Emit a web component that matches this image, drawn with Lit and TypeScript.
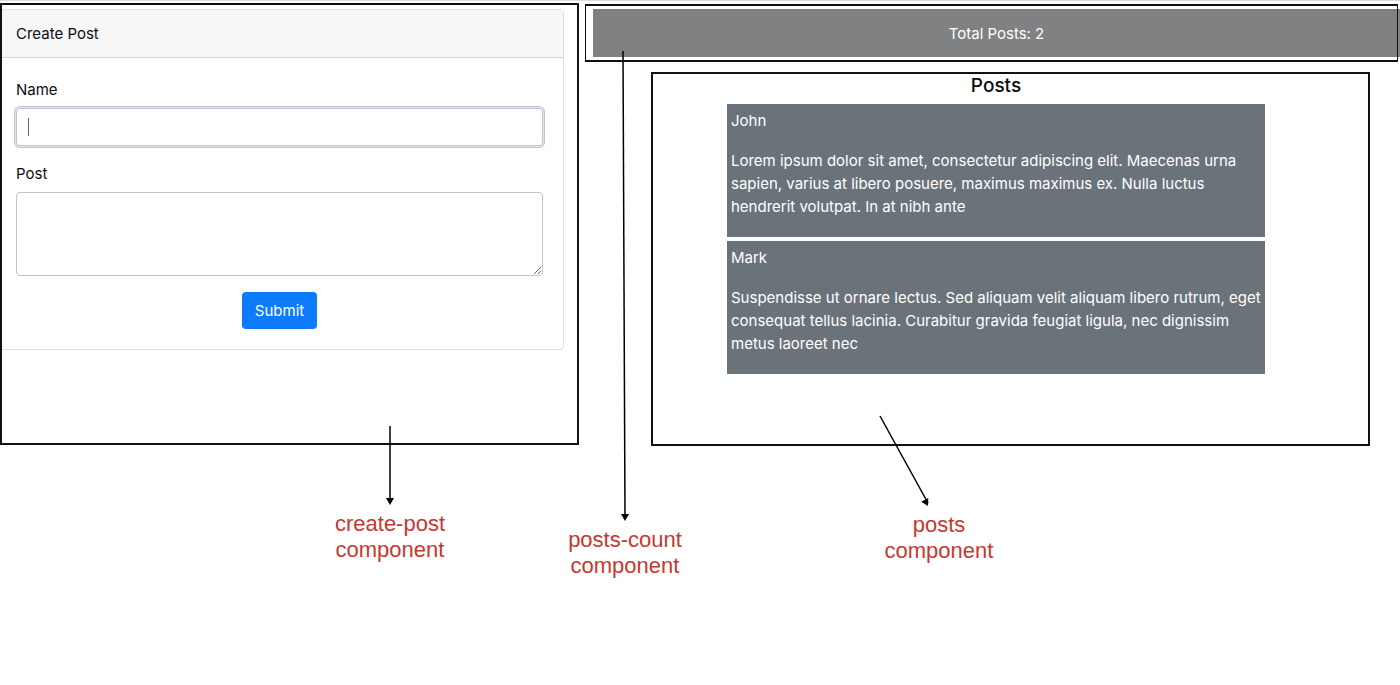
import { LitElement, html, css } from "lit";
import { customElement, property } from "lit/decorators.js";

interface Post {
  name: string;
  text: string;
}

const POSTS: Post[] = [
  {
    name: "John",
    text: "Lorem ipsum dolor sit amet, consectetur adipiscing elit. Maecenas urna sapien, varius at libero posuere, maximus maximus ex. Nulla luctus hendrerit volutpat. In at nibh ante",
  },
  {
    name: "Mark",
    text: "Suspendisse ut ornare lectus. Sed aliquam velit aliquam libero rutrum, eget consequat tellus lacinia. Curabitur gravida feugiat ligula, nec dignissim metus laoreet nec",
  },
];

// An arrow with a two-line red caption below its tip.
@customElement("component-note")
class ComponentNote extends LitElement {
  @property() name = "";
  @property({ type: Number }) length = 80;
  @property({ type: Number }) from = 60;
  @property({ type: Number }) to = 60;

  static styles = css`
    :host {
      display: flex;
      flex-direction: column;
      align-items: center;
      gap: 6px;
      width: 120px;
      pointer-events: none;
    }
    .caption {
      color: #c9372f;
      font: 22px/26px "Liberation Sans", Helvetica, sans-serif;
      text-align: center;
    }
    .arrow {
      display: block;
      overflow: visible;
    }
  `;

  render() {
    const angle = (Math.atan2(this.length, this.to - this.from) * 180) / Math.PI;
    return html`
      <svg class="arrow" width="120" height=${this.length} aria-hidden="true">
        <line x1=${this.from} y1="0" x2=${this.to} y2=${this.length - 3} stroke="#000" stroke-width="1.5" />
        <path d="M0 0L-7 -4V4Z" transform="translate(${this.to} ${this.length}) rotate(${angle})" />
      </svg>
      <div class="caption">${this.name}<br />component</div>
    `;
  }
}

@customElement("create-post")
class CreatePost extends LitElement {
  static styles = css`
    :host {
      display: block;
    }
    .card {
      border: 1px solid #dfdfe5;
      border-left: 0;
      border-radius: 0 4px 4px 0;
    }
    .header {
      padding: 12px 14px 11px;
      border-bottom: 1px solid #d4d4dc;
      background: #f7f7f8;
    }
    .body {
      display: flex;
      flex-direction: column;
      padding: 20px 20px 20px 14px;
    }
    .label {
      margin-bottom: 6px;
    }
    .field {
      position: relative;
      display: flex;
      margin-bottom: 16px;
    }
    .input,
    .area {
      box-sizing: border-box;
      width: 100%;
      margin: 0;
      padding: 6px 12px;
      border: 1px solid #c4c4d0;
      border-radius: 4px;
      outline: 0;
      background: #fff;
      color: #0b0d10;
      font: inherit;
    }
    .input {
      height: 38px;
      box-shadow: 0 0 0 1px #e4e4ea, 0 0 0 2px #c4c4d0;
      caret-color: transparent;
    }
    .caret {
      position: absolute;
      top: 10px;
      left: 12px;
      width: 1px;
      height: 18px;
      background: #5f666d;
    }
    .area {
      display: block;
      height: 84px;
      margin-bottom: 16px;
      resize: vertical;
    }
    .submit {
      align-self: center;
      height: 37px;
      padding: 0 13px;
      border: 0;
      border-radius: 4px;
      background: #0d7bfb;
      color: #fff;
      font: inherit;
    }
  `;

  render() {
    return html`
      <div class="card">
        <div class="header">Create Post</div>
        <form class="body" @submit=${(e: Event) => e.preventDefault()}>
          <label class="label" for="name">Name</label>
          <div class="field">
            <input class="input" id="name" type="text" />
            <span class="caret"></span>
          </div>
          <label class="label" for="post">Post</label>
          <textarea class="area" id="post"></textarea>
          <button class="submit" type="submit">Submit</button>
        </form>
      </div>
    `;
  }
}

@customElement("posts-count")
class PostsCount extends LitElement {
  @property({ type: Number }) count = 0;

  static styles = css`
    :host {
      display: block;
      padding: 13px 12px 11px;
      background: #808182;
      color: #fff;
      text-align: center;
    }
  `;

  render() {
    return html`Total Posts: ${this.count}`;
  }
}

@customElement("posts-list")
class PostsList extends LitElement {
  @property({ attribute: false }) posts: Post[] = [];

  static styles = css`
    :host {
      display: block;
    }
    .title {
      margin: 0 0 7px;
      font-size: 19px;
      font-weight: 500;
      line-height: 23px;
      text-align: center;
    }
    .list {
      display: grid;
      gap: 4px;
    }
    .post {
      padding: 5px 4px 19px;
      background: #6b737a;
      color: #fff;
    }
    .text {
      margin: 16px 0 0;
      line-height: 23px;
    }
  `;

  render() {
    return html`
      <h2 class="title">Posts</h2>
      <div class="list">
        ${this.posts.map(
          (post) => html`
            <article class="post">
              <div>${post.name}</div>
              <p class="text">${post.text}</p>
            </article>
          `
        )}
      </div>
    `;
  }
}

@customElement("app-root")
class AppRoot extends LitElement {
  static styles = css`
    :host {
      display: block;
      isolation: isolate;
      overflow: hidden;
      min-height: 100vh;
      box-sizing: border-box;
      border-top: 1px solid #dcdce4;
      background: #fff;
      color: #0b0d10;
      font: 15px/24px Inter, Roboto, sans-serif;
    }
    .page {
      display: grid;
      grid-template-columns: 579fr 813fr;
      align-items: start;
      gap: 6px;
      padding: 2px 2px 0 0;
    }
    .frame {
      position: relative;
      box-sizing: border-box;
      border: 2px solid #111;
    }
    .create {
      min-height: 442px;
      padding: 4px 13px 0 0;
    }
    .side {
      display: flex;
      flex-direction: column;
      gap: 10px;
      padding-top: 1px;
    }
    .count {
      padding: 3px 0 3px 7px;
      border-width: 2px 1px;
    }
    /* The bar runs under the frame's right edge to the window's edge. */
    .bar {
      position: relative;
      z-index: -1;
      margin-right: -3px;
    }
    .posts {
      min-height: 374px;
      margin: 0 28px 0 66px;
      padding: 0 103px 0 74px;
    }
    .note {
      position: absolute;
      transform: translateX(-50%);
    }
    .create .note {
      top: 421px;
      left: 388px;
    }
    .count .note {
      top: 45px;
      left: 39px;
    }
    .posts .note {
      top: 342px;
      left: 40%;
    }
  `;

  render() {
    return html`
      <main class="page">
        <section class="frame create">
          <create-post></create-post>
          <component-note class="note" name="create-post" length="79"></component-note>
        </section>
        <div class="side">
          <section class="frame count">
            <posts-count class="bar" .count=${POSTS.length}></posts-count>
            <component-note class="note" name="posts-count" length="470" from="58"></component-note>
          </section>
          <section class="frame posts">
            <posts-list .posts=${POSTS}></posts-list>
            <component-note class="note" name="posts" length="90" from="1" to="49"></component-note>
          </section>
        </div>
      </main>
    `;
  }
}
